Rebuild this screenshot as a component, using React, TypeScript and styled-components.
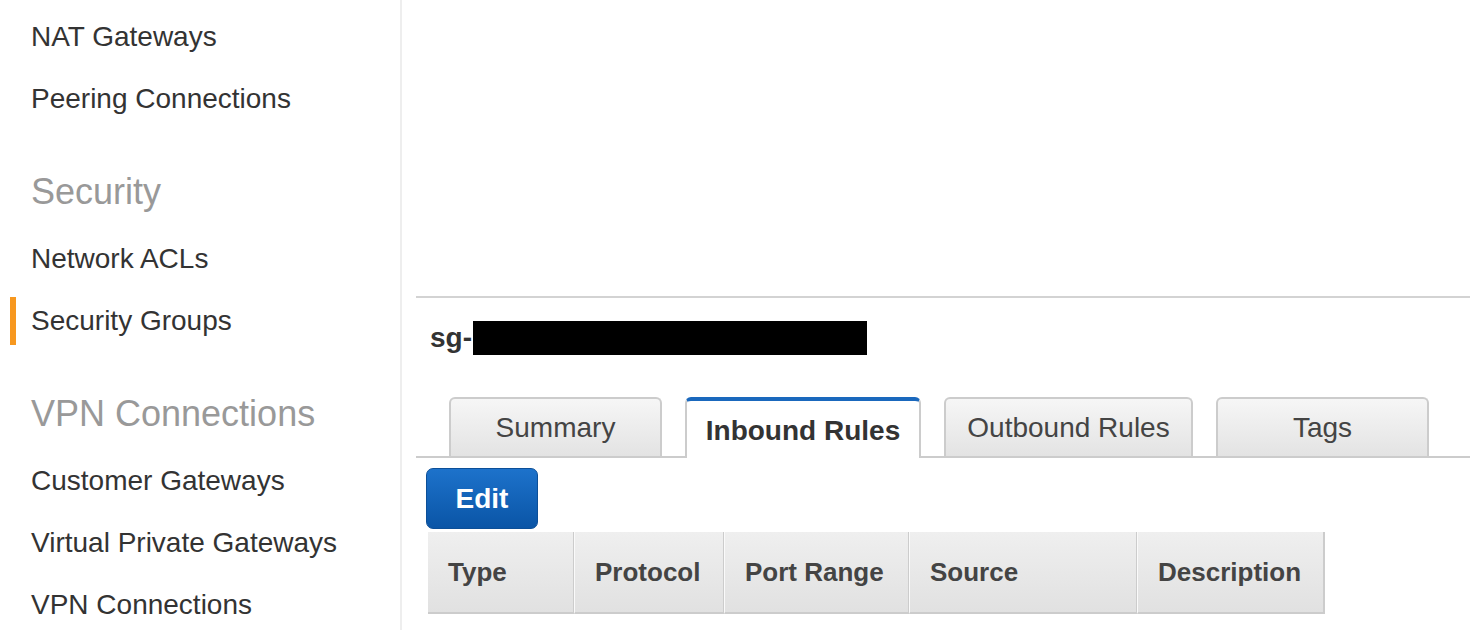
import React from "react";
import styled, {createGlobalStyle} from "styled-components";

const GlobalStyle = createGlobalStyle`
    html, body {
        margin: 0;
        padding: 0;
        overflow: hidden;
        background: #fff;
        font-family: "Liberation Sans", Arial, Helvetica, sans-serif;
    }
`

type NavEntry = { label: string; heading?: boolean; active?: boolean };

const navEntries: NavEntry[] = [
    {label: "NAT Gateways"},
    {label: "Peering Connections"},
    {label: "Security", heading: true},
    {label: "Network ACLs"},
    {label: "Security Groups", active: true},
    {label: "VPN Connections", heading: true},
    {label: "Customer Gateways"},
    {label: "Virtual Private Gateways"},
    {label: "VPN Connections"},
];

const tabs = [
    {label: "Summary", width: 213},
    {label: "Inbound Rules", width: 236, active: true},
    {label: "Outbound Rules", width: 249},
    {label: "Tags", width: 213},
];

const columns = [
    {label: "Type", width: 146},
    {label: "Protocol", width: 150},
    {label: "Port Range", width: 185},
    {label: "Source", width: 228},
    {label: "Description", width: 188},
];

const App = () => {
    return (
        <Layout>
            <GlobalStyle/>

            <Sidebar>
                {navEntries.map((entry, i) =>
                    entry.heading
                        ? <NavHeading key={i}>{entry.label}</NavHeading>
                        : <NavItem key={i} $active={entry.active}>{entry.label}</NavItem>
                )}
            </Sidebar>

            <Main>
                <DetailPanel>
                    <TitleRow>
                        <GroupId>sg-</GroupId>
                        <Redacted/>
                    </TitleRow>

                    <TabBar>
                        {tabs.map((tab) => (
                            <Tab key={tab.label} $width={tab.width} $active={tab.active}>
                                {tab.label}
                            </Tab>
                        ))}
                    </TabBar>

                    <EditButton>Edit</EditButton>

                    <RulesTable>
                        <thead>
                        <tr>
                            {columns.map((col, i) => (
                                <HeaderCell key={col.label} $width={col.width} $first={i === 0}
                                            $last={i === columns.length - 1}>
                                    {col.label}
                                </HeaderCell>
                            ))}
                        </tr>
                        </thead>
                    </RulesTable>
                </DetailPanel>
            </Main>
        </Layout>
    );
};

const Layout = styled.div`
    display: flex;
    height: 100vh;
    overflow: hidden;
`

const Sidebar = styled.nav`
    width: 400px;
    flex-shrink: 0;
    border-right: 2px solid #eeeeee;
    padding-top: 6px;
    display: flex;
    flex-direction: column;
`

const NavItem = styled.a<{ $active?: boolean }>`
    display: block;
    margin: 7px 0 7px 10px;
    padding-left: 15px;
    border-left: 6px solid ${p => p.$active ? "#f7981f" : "transparent"};
    line-height: 48px;
    font-size: 28px;
    color: #333;
    white-space: nowrap;
    cursor: pointer;
`

const NavHeading = styled.div`
    padding: 31px 0 5px 31px;
    line-height: 62px;
    font-size: 36px;
    color: #999;
    white-space: nowrap;
`

const Main = styled.main`
    flex: 1;
    padding: 296px 0 0 14px;
    min-width: 0;
`

const DetailPanel = styled.section`
    border-top: 2px solid #d3d3d3;
`

const TitleRow = styled.div`
    display: flex;
    align-items: center;
    height: 34px;
    margin: 23px 0 0 14px;
`

const GroupId = styled.span`
    font-size: 28px;
    font-weight: 700;
    color: #333;
    margin-right: 1px;
`

const Redacted = styled.span`
    display: block;
    width: 394px;
    height: 34px;
    background: #000;
`

const TabBar = styled.div`
    display: flex;
    align-items: flex-start;
    gap: 23px;
    margin-top: 42px;
    padding-left: 33px;
    height: 59px;
    border-bottom: 2px solid #cccccc;
`

const Tab = styled.div<{ $width: number; $active?: boolean }>`
    box-sizing: border-box;
    width: ${p => p.$width}px;
    height: ${p => p.$active ? 61 : 59}px;
    display: flex;
    align-items: center;
    justify-content: center;
    padding-top: ${p => p.$active ? 2 : 0}px;
    border: 2px solid #cccccc;
    border-bottom: none;
    border-top: ${p => p.$active ? "4px solid #1a68bd" : "2px solid #cccccc"};
    border-radius: 6px 6px 0 0;
    background: ${p => p.$active ? "#fff" : "linear-gradient(#f6f6f6, #e3e3e3)"};
    font-size: 28px;
    font-weight: ${p => p.$active ? 700 : 400};
    color: ${p => p.$active ? "#333" : "#444"};
    position: relative;
    z-index: 1;
    cursor: pointer;
`

const EditButton = styled.button`
    display: block;
    box-sizing: border-box;
    width: 112px;
    height: 61px;
    margin: 10px 0 0 10px;
    border: 1px solid #0c4f98;
    border-radius: 7px;
    background: linear-gradient(#1d72cb, #0a55a6);
    color: #fff;
    font-family: inherit;
    font-size: 28px;
    font-weight: 700;
    cursor: pointer;
`

const RulesTable = styled.table`
    margin: 3px 0 0 12px;
    border-collapse: separate;
    border-spacing: 0;
`

const HeaderCell = styled.th<{ $width: number; $first?: boolean; $last?: boolean }>`
    box-sizing: border-box;
    width: ${p => p.$width}px;
    height: 82px;
    padding: 0 0 0 20px;
    text-align: left;
    font-size: 26px;
    font-weight: 700;
    color: #444;
    white-space: nowrap;
    background: linear-gradient(#efefef, #e1e1e1);
    border-bottom: 2px solid #cccccc;
    border-left: ${p => p.$first ? "none" : "1px solid #fafafa"};
    border-right: ${p => p.$last ? "2px solid #cccccc" : "1px solid #cccccc"};
`

export default App;
